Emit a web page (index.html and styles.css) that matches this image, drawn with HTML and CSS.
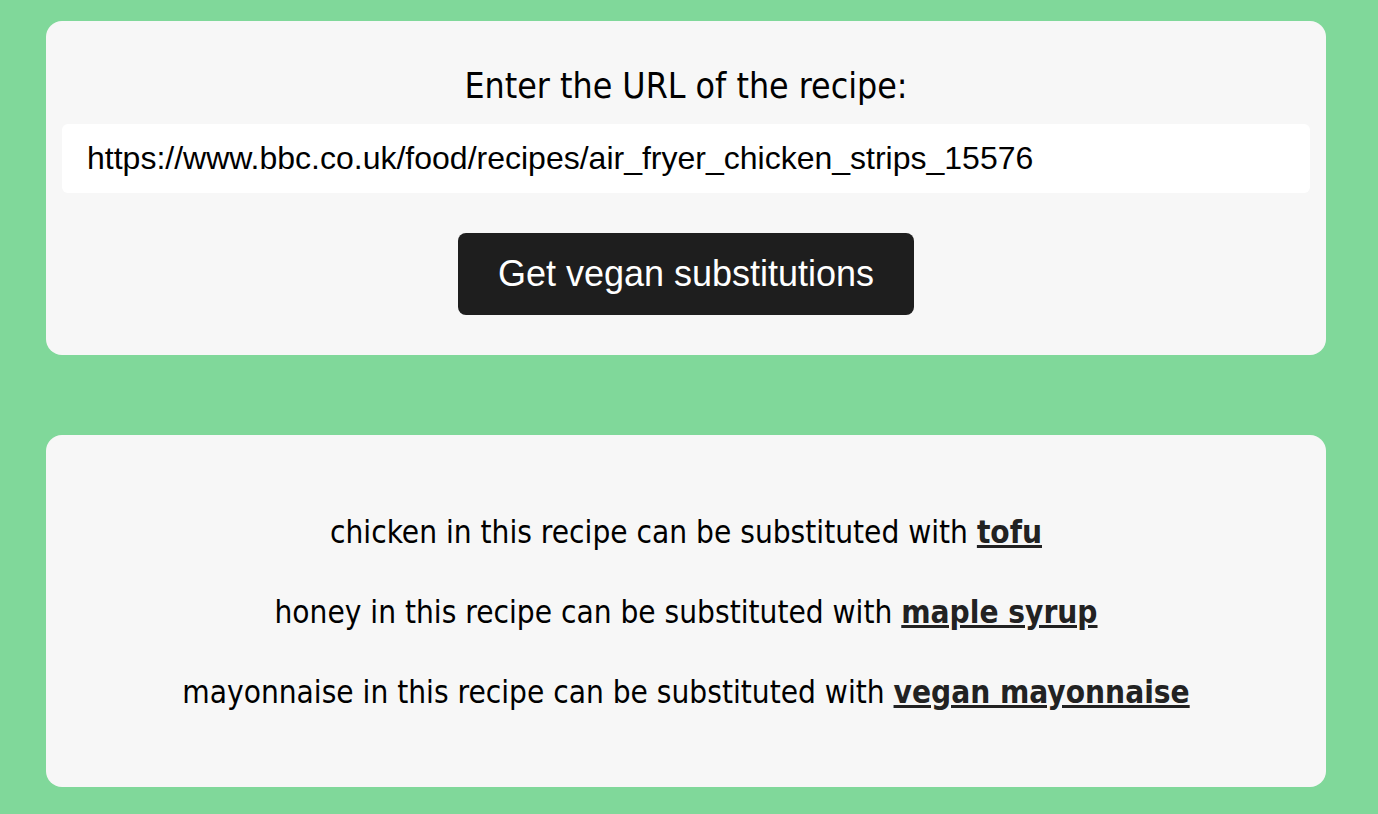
FILE: index.html
```html
<!DOCTYPE html>
<html>
<head>
<meta charset="utf-8">
<link rel="stylesheet" href="styles.css">
</head>
<body>
<div class="page">
  <section class="card form-card">
    <label class="prompt" for="url">Enter the URL of the recipe:</label>
    <input id="url" class="url-input" type="text" value="https://www.bbc.co.uk/food/recipes/air_fryer_chicken_strips_15576">
    <button class="submit">Get vegan substitutions</button>
  </section>
  <section class="card results-card">
    <p class="result">chicken in this recipe can be substituted with <a class="sub" href="#">tofu</a></p>
    <p class="result">honey in this recipe can be substituted with <a class="sub" href="#">maple syrup</a></p>
    <p class="result">mayonnaise in this recipe can be substituted with <a class="sub" href="#">vegan mayonnaise</a></p>
  </section>
</div>
</body>
</html>
```

FILE: styles.css
```css
html, body {
  margin: 0;
  padding: 0;
  background: #80d89a;
}
body {
  font-family: "DejaVu Sans Condensed", "DejaVu Sans", sans-serif;
  color: #000;
}
.page {
  width: 1280px;
  padding: 21px 0 0 46px;
  display: flex;
  flex-direction: column;
  gap: 80px;
}
.card {
  background: #f7f7f7;
  border-radius: 16px;
  box-sizing: border-box;
}
.form-card {
  height: 334px;
  padding: 45px 16px 0;
  display: flex;
  flex-direction: column;
  align-items: center;
}
.prompt {
  display: block;
  font-size: 35.4px;
  line-height: 40px;
  margin-bottom: 18px;
}
.url-input {
  width: 100%;
  height: 69px;
  box-sizing: border-box;
  border: none;
  border-radius: 6px;
  background: #fff;
  padding: 0 25px;
  font-family: "Liberation Sans", Arial, sans-serif;
  font-size: 32px;
  color: #000;
  outline: none;
}
.submit {
  margin-top: 40px;
  width: 456px;
  height: 82px;
  border: none;
  border-radius: 8px;
  background: #1e1e1e;
  color: #fff;
  font-family: "Liberation Sans", Arial, sans-serif;
  font-size: 36px;
}
.results-card {
  height: 352px;
  padding: 77px 0 0;
  display: flex;
  flex-direction: column;
  align-items: center;
  gap: 40px;
}
.result {
  margin: 0;
  font-size: 31.3px;
  line-height: 40px;
  text-align: center;
}
.sub {
  color: #222;
  font-weight: bold;
  text-decoration: underline;
}
```
